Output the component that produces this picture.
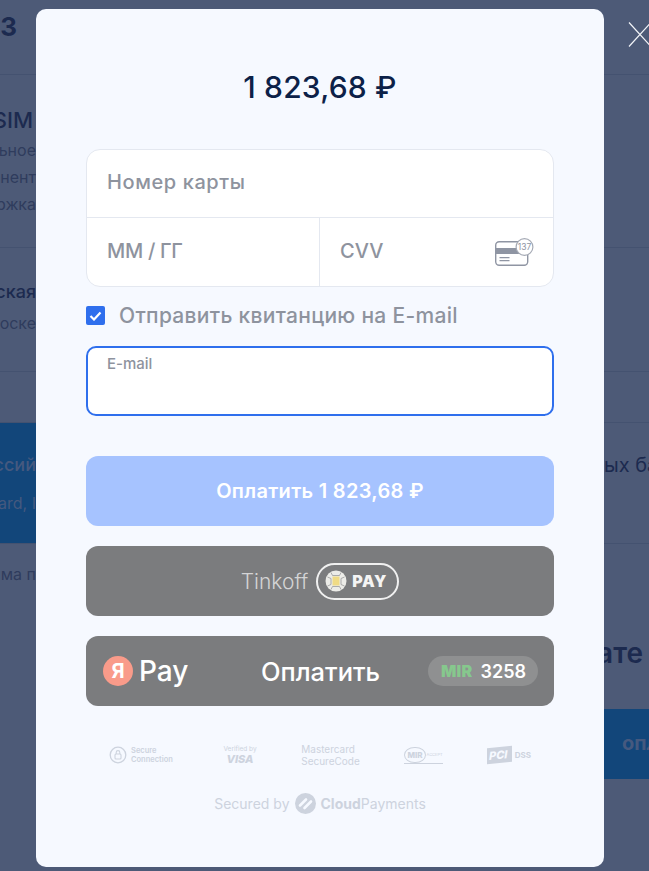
<div class="page">
  <section class="row head">
    <div class="left title-lg cut-head">ЗАКАЗ</div>
  </section>

  <section class="row sim">
    <div class="left title cut-sim">eSIM</div>
    <div class="left desc">Дополнительное</div>
    <div class="left desc">абонент</div>
    <div class="left desc">поддержка</div>
  </section>

  <section class="row region">
    <div class="left title narrow">Московская</div>
    <div class="left desc">Моске</div>
  </section>

  <div class="spacer"></div>

  <section class="row band">
    <div class="band-left">
      <div class="left title narrow dim">Россий</div>
      <div class="left desc dim">Mastercard, I</div>
    </div>
    <div class="right title">ых банков</div>
  </section>

  <section class="foot">
    <div class="left desc">Сумма п</div>
    <div class="total"><span>Оплате</span></div>
    <div class="right-btn">оплатить</div>
  </section>
</div>

<div class="modal">
  <div class="amount">1 823,68 ₽</div>

  <div class="card">
    <input class="field number" placeholder="Номер карты" />
    <div class="card-row">
      <input class="field half expiry" placeholder="ММ / ГГ" />
      <div class="cvv">
        <input class="field half" placeholder="CVV" />
        <svg class="cvv-icon" width="40" height="28" viewBox="0 0 40 28" fill="none">
          <rect x="0.7" y="3.7" width="32" height="23.5" rx="3.5" stroke="#8f95a3" stroke-width="1.4" />
          <rect x="1" y="10" width="31" height="6" fill="#8f95a3" />
          <path d="M4.5 19.7h10M4.5 22.7h10" stroke="#8f95a3" stroke-width="1.2" />
          <circle cx="29.5" cy="9" r="8.4" fill="#fff" stroke="#a5aab5" stroke-width="1.2" />
          <text x="29.5" y="12" text-anchor="middle" class="cvv-num">137</text>
        </svg>
      </div>
    </div>
  </div>

  <label class="receipt">
    <span class="check">
      <svg width="13" height="10" viewBox="0 0 13 10" fill="none"><path d="M1.5 5l3.5 3.5 6.5-7" stroke="#fff" stroke-width="2.2" /></svg>
    </span>
    Отправить квитанцию на E-mail
  </label>

  <div class="email">
    <span class="email-label">E-mail</span>
  </div>

  <button class="btn pay">Оплатить 1 823,68 ₽</button>

  <button class="btn wallet tinkoff">
    <span class="tk-name">Tinkoff</span>
    <span class="tk-pill">
      <svg width="22" height="22" viewBox="0 0 22 22" fill="none">
        <circle cx="11" cy="11" r="10.5" fill="#ecece8" />
        <path d="M2.5 7l3.5 1.5v6L2.5 16M19.5 7L16 8.5v6l3.5 1.5M6 2.5L7.5 5.5h7L16 2.5M6 19.5l1.5-3h7l1.5 3" stroke="#9a9b9c" stroke-width="0.8" />
        <rect x="7.5" y="6.5" width="7" height="9" fill="#f0db85" />
      </svg>
      <b>PAY</b>
    </span>
  </button>

  <button class="btn wallet yandex">
    <span class="ya">
      <span class="ya-dot">Я</span>
      <span class="ya-pay">Pay</span>
    </span>
    <span class="ya-text">Оплатить</span>
    <span class="ya-card"><b>MIR</b><span>3258</span></span>
  </button>

  <div class="logos">
    <div class="logo secure">
      <svg width="18" height="18" viewBox="0 0 18 18" fill="none">
        <circle cx="9" cy="9" r="7.8" stroke="#cdd3de" stroke-width="1.3" />
        <rect x="6" y="8" width="6" height="5" rx="1" stroke="#cdd3de" stroke-width="1.1" />
        <path d="M7.2 8V6.4a1.8 1.8 0 013.6 0V8" stroke="#cdd3de" stroke-width="1.1" />
      </svg>
      <span>Secure<br />Connection</span>
    </div>
    <div class="logo visa"><span>Verified by</span><b>VISA</b></div>
    <div class="logo mc">Mastercard<br />SecureCode</div>
    <div class="logo mir"><b>MIR</b><span>ACCEPT</span></div>
    <div class="logo pci"><b>PCI</b><span>DSS</span></div>
  </div>

  <div class="secured">
    Secured by
    <svg width="21" height="21" viewBox="0 0 21 21">
      <circle cx="10.5" cy="10.5" r="10.5" fill="#cdd3de" />
      <path d="M5 12.5l6-6M9.5 15l6.5-6.5" stroke="#f6f9ff" stroke-width="2.6" stroke-linecap="round" />
    </svg>
    <span><b>Cloud</b>Payments</span>
  </div>
</div>

<svg class="close" width="21" height="26" viewBox="0 0 21 26" fill="none">
  <path d="M1 0.5l24 26.2M23 0.5L1 24.5" stroke="#f2f4f8" stroke-width="1.2" />
</svg>

<style>
  :global(body) {
    overflow: hidden;
    background: #4d5a77;
    font-family: Inter, "Noto Sans", sans-serif;
  }

  .page {
    height: 871px;
    overflow: hidden;
    background: #4d5a77;
    color: #1c2a4f;
  }

  .row {
    position: relative;
    border-bottom: 1px solid #445270;
    box-sizing: border-box;
  }

  .left {
    width: 36px;
    display: flex;
    justify-content: flex-end;
    white-space: nowrap;
  }

  .title {
    font-size: 20px;
    line-height: 28px;
    font-weight: 500;
  }

  .narrow {
    font-size: 18px;
  }

  .title-lg {
    font-size: 26px;
    line-height: 36px;
    font-weight: 700;
  }

  .desc {
    font-size: 16px;
    line-height: 27px;
    color: #2f3c5d;
  }

  .dim {
    color: #45597f;
  }

  .head {
    height: 75px;
    padding-top: 9px;
  }

  .cut-head {
    padding-right: 19px;
    box-sizing: border-box;
  }

  .cut-sim {
    font-size: 22px;
    padding-right: 3px;
    box-sizing: border-box;
    margin-bottom: 3px;
  }

  .sim {
    height: 173px;
    padding-top: 31px;
  }

  .region {
    height: 124px;
    padding-top: 30px;
  }

  .region .title {
    margin-bottom: 4px;
  }

  .spacer {
    height: 51px;
    border-bottom: 1px solid #445270;
    box-sizing: border-box;
  }

  .band {
    height: 121px;
    display: flex;
    justify-content: space-between;
  }

  .band-left {
    width: 60px;
    background: #12467a;
    padding-top: 28px;
    box-sizing: border-box;
  }

  .band-left .title {
    margin-bottom: 11px;
  }

  .right {
    width: 45px;
    white-space: nowrap;
    overflow: hidden;
    font-weight: 400;
    padding-top: 28px;
  }

  .foot {
    padding-top: 17px;
  }

  .total {
    display: flex;
    justify-content: flex-end;
    margin: 47px 0 0 auto;
    width: 45px;
    padding-right: 6px;
    box-sizing: border-box;
    overflow: hidden;
    white-space: nowrap;
    font-size: 28px;
    line-height: 36px;
    font-weight: 600;
  }

  .right-btn {
    margin: 38px 0 0 auto;
    width: 45px;
    height: 70px;
    box-sizing: border-box;
    padding-left: 18px;
    background: #12467a;
    color: #45597f;
    font-size: 20px;
    font-weight: 700;
    line-height: 68px;
    white-space: nowrap;
    overflow: hidden;
  }

  .modal {
    position: fixed;
    top: 9px;
    left: 36px;
    width: 568px;
    height: 858px;
    box-sizing: border-box;
    padding: 56px 50px 0;
    background: #f6f9ff;
    border-radius: 10px;
    color: #0c2148;
  }

  .amount {
    font-size: 30px;
    line-height: 44px;
    letter-spacing: 0.2px;
    font-weight: 500;
    text-align: center;
  }

  .card {
    margin-top: 40px;
    height: 138px;
    box-sizing: border-box;
    background: #fff;
    border: 1px solid #e4e8f0;
    border-radius: 14px;
    overflow: hidden;
  }

  .field {
    display: block;
    width: 100%;
    height: 67px;
    box-sizing: border-box;
    padding: 0 20px 3px;
    border: 0;
    outline: 0;
    background: transparent;
    font: 500 20px Inter, "Noto Sans", sans-serif;
  }

  .field::placeholder {
    color: #8e939e;
    opacity: 1;
  }

  .number {
    letter-spacing: 0.6px;
  }

  .expiry {
    letter-spacing: -0.3px;
  }

  .card-row {
    display: grid;
    grid-template-columns: 232px 1fr;
    border-top: 1px solid #e4e8f0;
  }

  .half {
    height: 68px;
  }

  .cvv {
    position: relative;
    border-left: 1px solid #e4e8f0;
  }

  .cvv-icon {
    position: absolute;
    top: 20px;
    right: 18px;
  }

  .cvv-num {
    font-size: 8.5px;
    fill: #8f95a3;
  }

  .receipt {
    display: flex;
    align-items: center;
    gap: 14px;
    margin-top: 19px;
    height: 19px;
    font-size: 21px;
    letter-spacing: 0.3px;
    font-weight: 500;
    color: #8e939e;
    white-space: nowrap;
  }

  .check {
    display: flex;
    align-items: center;
    justify-content: center;
    width: 19px;
    height: 19px;
    border-radius: 2px;
    background: #2f6fed;
  }

  .email {
    position: relative;
    margin-top: 21px;
    height: 70px;
    box-sizing: border-box;
    background: #fff;
    border: 2px solid #2f6fed;
    border-radius: 10px;
  }

  .email-label {
    position: absolute;
    left: 19px;
    top: 6px;
    font-size: 15px;
    line-height: 20px;
    font-weight: 500;
    color: #8e939e;
  }

  .btn {
    display: flex;
    align-items: center;
    width: 100%;
    height: 70px;
    border: 0;
    padding: 0;
    border-radius: 12px;
    font-family: Inter, "Noto Sans", sans-serif;
    color: #fff;
  }

  .pay {
    justify-content: center;
    margin-top: 40px;
    background: #a6c3ff;
    font-size: 20px;
    letter-spacing: 0.3px;
    font-weight: 600;
  }

  .wallet {
    margin-top: 20px;
    background: #7b7c7e;
  }

  .tinkoff {
    justify-content: center;
    gap: 8px;
  }

  .tk-name {
    font-size: 21px;
    font-weight: 300;
    color: #d4d4d5;
  }

  .tk-pill {
    display: flex;
    align-items: center;
    gap: 5px;
    height: 37px;
    width: 83px;
    box-sizing: border-box;
    padding-left: 7px;
    border: 2px solid #f0f0f0;
    border-radius: 19px;
  }

  .tk-pill b {
    font-size: 16px;
    font-weight: 900;
    letter-spacing: 0.6px;
    color: #f4f4f4;
  }

  .yandex {
    display: grid;
    grid-template-columns: 1fr auto 1fr;
    padding: 0 16px 0 17px;
    box-sizing: border-box;
  }

  .ya {
    display: flex;
    align-items: center;
    gap: 6px;
  }

  .ya-dot {
    display: flex;
    align-items: center;
    justify-content: center;
    width: 30px;
    height: 30px;
    border-radius: 50%;
    background: #f99b8a;
    font-size: 20px;
    font-weight: 700;
  }

  .ya-pay {
    font-size: 28px;
    font-weight: 500;
  }

  .ya-text {
    font-size: 25.5px;
    font-weight: 500;
  }

  .ya-card {
    justify-self: end;
    display: flex;
    align-items: center;
    gap: 8px;
    width: 110px;
    height: 30px;
    box-sizing: border-box;
    padding-left: 13px;
    border-radius: 15px;
    background: #8f9091;
    font-size: 18px;
    font-weight: 600;
  }

  .ya-card b {
    font-size: 16px;
    font-weight: 900;
    letter-spacing: 0.3px;
    color: #86c88d;
  }

  .logos {
    display: flex;
    justify-content: space-between;
    align-items: center;
    height: 20px;
    margin-top: 39px;
    padding: 0 23px;
    color: #cdd3de;
  }

  .logo {
    display: flex;
    align-items: center;
  }

  .secure {
    gap: 4px;
    font-size: 7.5px;
    line-height: 9px;
    font-weight: 600;
  }

  .visa {
    flex-direction: column;
    margin-left: 6px;
    font-size: 6.5px;
    line-height: 9px;
  }

  .visa b {
    font-size: 11px;
    font-style: italic;
    font-weight: 800;
    line-height: 11px;
  }

  .mc {
    display: block;
    font-size: 10px;
    line-height: 12px;
    white-space: nowrap;
  }

  .mir {
    gap: 1px;
    font-size: 4px;
    border-bottom: 1px solid #cdd3de;
  }

  .mir b {
    font-size: 8px;
    font-weight: 800;
    padding: 2px;
    border: 1.5px solid #cdd3de;
    border-radius: 50%;
  }

  .pci {
    gap: 3px;
    font-size: 8px;
    font-weight: 700;
  }

  .pci b {
    padding: 2px 4px 2px 2px;
    background: #cdd3de;
    color: #f6f9ff;
    font-size: 11px;
    font-style: italic;
    font-weight: 800;
    line-height: 12px;
    transform: skewY(-6deg);
  }

  .secured {
    display: flex;
    justify-content: center;
    align-items: center;
    gap: 5px;
    height: 20px;
    margin-top: 28px;
    font-size: 14px;
    color: #cdd3de;
  }

  .secured b {
    font-weight: 700;
  }

  .close {
    position: fixed;
    top: 22px;
    left: 628px;
  }
</style>
